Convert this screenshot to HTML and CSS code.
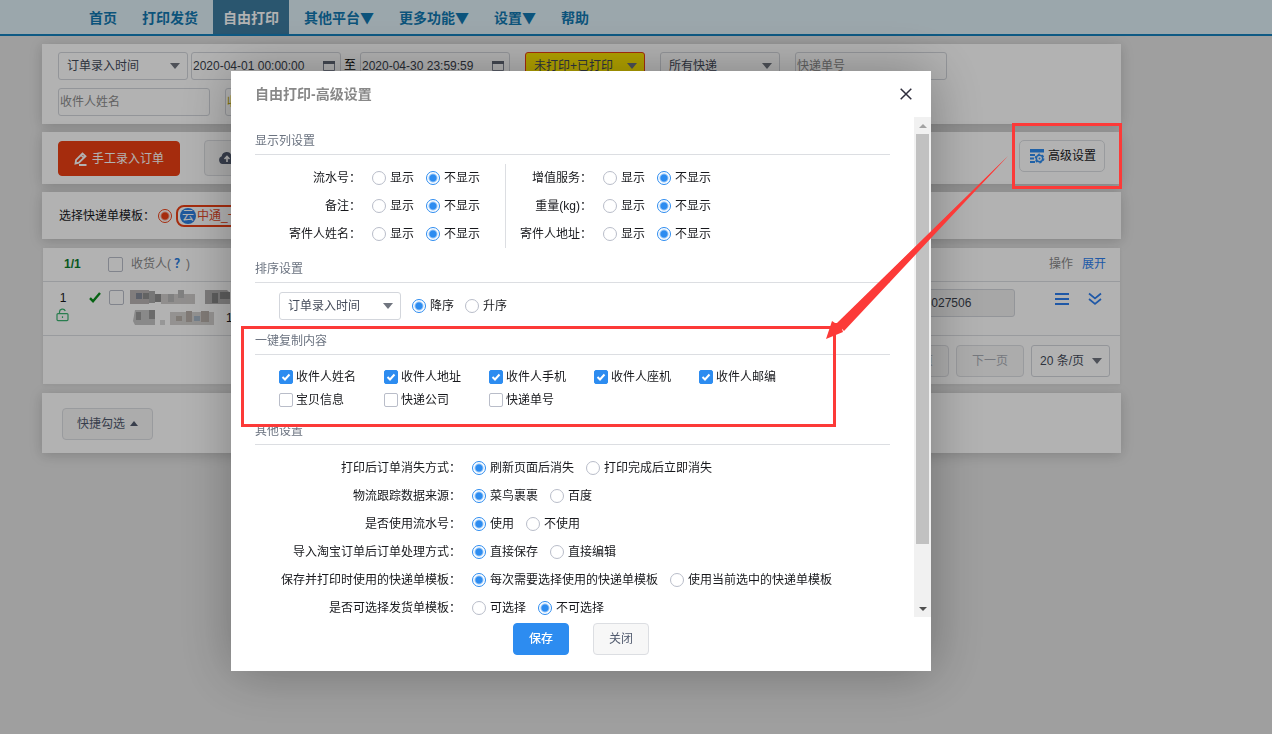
FILE: index.html
```html
<!DOCTYPE html>
<html lang="zh-CN">
<head>
<meta charset="utf-8">
<title>自由打印</title>
<link rel="stylesheet" href="styles.css">
</head>
<body>
<header class="topbar">
  <nav class="nav">
    <a class="nav-item" href="#">首页</a>
    <a class="nav-item" href="#">打印发货</a>
    <a class="nav-item active" href="#">自由打印</a>
    <a class="nav-item" href="#">其他平台▼</a>
    <a class="nav-item" href="#">更多功能▼</a>
    <a class="nav-item" href="#">设置▼</a>
    <a class="nav-item" href="#">帮助</a>
  </nav>
</header>

<main class="page">
  <section class="panel filters">
    <div class="filter-row">
      <div class="range">
        <span class="select w130"><select aria-label="时间类型"><option>订单录入时间</option></select></span>
        <span class="date"><input class="field" type="text" aria-label="开始时间" value="2020-04-01 00:00:00"><svg width="12" height="12" viewBox="0 0 12 12"><path d="M.5 2.500h11v8h-11z" fill="none" stroke="#808695"/><path d="M0 1h12v3H0z" fill="#606774"/></svg></span>
        <span class="to">至</span>
        <span class="date"><input class="field" type="text" aria-label="结束时间" value="2020-04-30 23:59:59"><svg width="12" height="12" viewBox="0 0 12 12"><path d="M.5 2.500h11v8h-11z" fill="none" stroke="#808695"/><path d="M0 1h12v3H0z" fill="#606774"/></svg></span>
      </div>
      <span class="select w120 warn"><select aria-label="打印状态"><option>未打印+已打印</option></select></span>
      <span class="select w120"><select aria-label="快递"><option>所有快递</option></select></span>
      <input class="field w152" type="text" placeholder="快递单号" aria-label="快递单号">
    </div>
    <div class="filter-row">
      <input class="field w152" type="text" placeholder="收件人姓名" aria-label="收件人姓名">
      <input class="field w152 hint" type="text" placeholder="收件人手机" aria-label="收件人手机">
    </div>
  </section>

  <section class="panel actions">
    <button class="btn danger" type="button">
      <svg width="14" height="14" viewBox="0 0 14 14" fill="none" stroke="#fff" stroke-width="1.800"><path d="M1.500 11.500l.6-3.600L8.500 1.500l3 2.700-6.600 6.500zM7 3.200l3 2.700M5 13h7.500"/></svg>手工录入订单
    </button>
    <button class="btn upload" type="button">
      <svg width="18" height="14" viewBox="0 0 18 14"><path d="M4.500 13A4 4 0 0 1 3.700 5.300 5 5 0 0 1 13.400 4.500 4.300 4.300 0 0 1 13.500 13z" fill="#515a6e"/><path d="M9 11V5.500M6.500 8L9 5.500 11.500 8" fill="none" stroke="#fff" stroke-width="1.600"/></svg>导入订单
    </button>
    <button class="btn advanced" type="button">
      <svg width="15" height="15" viewBox="0 0 15 15"><path d="M0 0h14v3.500H0zM0 5h5v2H0zM0 8.500h4v2H0zM0 12h5v2H0z" fill="#2d8cf0"/><circle cx="9.500" cy="9.500" r="4" fill="#fff" stroke="#fff" stroke-width="2"/><circle cx="9.500" cy="9.500" r="3.200" fill="none" stroke="#2d8cf0" stroke-width="1.500"/><circle cx="9.500" cy="9.500" r="4.300" fill="none" stroke="#2d8cf0" stroke-width="1.200" stroke-dasharray="2.250 2.250"/><circle cx="9.500" cy="9.500" r="1" fill="#2d8cf0"/></svg>高级设置
    </button>
  </section>

  <section class="panel template">
    <span>选择快递单模板：</span>
    <input class="radio red" type="radio" name="tpl" id="tpl" checked>
    <label class="pill" for="tpl"><span class="cloud">云</span>中通_一联单</label>
  </section>

  <section class="panel orders">
    <table class="grid">
      <thead>
        <tr>
          <th class="col-index count">1/1</th>
          <th class="col-main"><div class="cell"><input class="check big" type="checkbox" aria-label="全选"><span>收货人(<b class="help">？</b>)</span></div></th>
          <th class="col-ops">操作<a class="link" href="#">展开</a></th>
        </tr>
      </thead>
      <tbody>
        <tr>
          <td class="col-index">
            <div class="index">
              <span>1</span>
              <svg class="tick" width="12" height="12" viewBox="0 0 12 12"><path d="M1 6.200L4 9.200 11 1" fill="none" stroke="#0a8f1c" stroke-width="2.400"/></svg>
              <svg width="14" height="14" viewBox="0 0 14 14" fill="none" stroke="#3cb371" stroke-width="1.200"><rect x="1" y="5.600" width="11" height="7" rx="1"/><path d="M3.500 5.500V4a3 3 0 0 1 5.800-1M6.500 8.200v1.800"/></svg>
            </div>
          </td>
          <td class="col-main">
            <div class="cell row-top">
              <input class="check big" type="checkbox" aria-label="选择订单">
              <svg class="mosaic" width="104" height="36" viewBox="0 0 104 36">
                <path d="M0 1h19v14H0z" fill="#b9b3b4"/><path d="M6 4h6v6H6z" fill="#858a99"/><path d="M13 4h6v6h-6zM25 5h6v8h-6z" fill="#8e8e8e"/><path d="M19 2h6v12h-6z" fill="#aaa"/><path d="M31 5h34v10H31z" fill="#cfcccb"/><path d="M38 5h6v8h-6zM48 1h6v8h-6z" fill="#b8b8b8"/><path d="M75 1h22l3 3v11H75z" fill="#b2b0b0"/><path d="M82 4h6v10h-6zM90 3h10v7H90z" fill="#858585"/>
                <path d="M5 21h20v15H5l-2-4z" fill="#c4c4c4"/><path d="M6 23h5v8H6zM19 21h6v9h-6z" fill="#9a9a9a"/><path d="M30 31h5v5h-5z" fill="#d8d8d8"/><path d="M40 23h44v13H40z" fill="#d4d2d0"/><path d="M46 27h6v5h-6zM56 22h6v11h-6zM71 22h8v11h-8z" fill="#b8b0aa"/><path d="M64 27h6v5h-6z" fill="#a8b8c8"/>
              </svg>
              <div class="number"><span class="line2">1</span><input class="field filled" type="text" aria-label="运单号" value="73027506"></div>
            </div>
          </td>
          <td class="col-ops">
            <div class="ops">
              <button class="icon-btn" type="button" aria-label="菜单"><svg width="14" height="12" viewBox="0 0 14 12"><path d="M0 1h14M0 6h14M0 11h14" stroke="#2d7ff0" stroke-width="2"/></svg></button>
              <button class="icon-btn" type="button" aria-label="展开"><svg width="14" height="14" viewBox="0 0 14 14"><path d="M1 1.500l6 5 6-5M1 7l6 5 6-5" fill="none" stroke="#2d7ff0" stroke-width="1.700"/></svg></button>
            </div>
          </td>
        </tr>
      </tbody>
    </table>
    <div class="pager">
      <button class="btn" type="button" disabled>上一页</button>
      <button class="btn" type="button" disabled>下一页</button>
      <span class="select page-size"><select aria-label="每页条数"><option>20 条/页</option></select></span>
    </div>
  </section>

  <section class="panel quick">
    <button class="btn gray" type="button">快捷勾选<i class="up"></i></button>
  </section>
</main>

<div class="shade"></div>

<div class="modal" role="dialog" aria-labelledby="dlg-title">
  <div class="modal-head">
    <h1 id="dlg-title">自由打印-高级设置</h1>
    <button class="icon-btn" type="button" aria-label="关闭窗口"><svg width="12" height="12" viewBox="0 0 12 12"><path d="M.7.7l10.600 10.600M11.300.7L.7 11.300" stroke="#2e2d3c" stroke-width="1.500"/></svg></button>
  </div>
  <div class="modal-body">
    <form class="settings">
      <h2>显示列设置</h2>
      <div class="columns">
        <div class="rows">
          <div class="row"><span class="name">流水号：</span><label><input class="radio" type="radio" name="a1">显示</label><label><input class="radio" type="radio" name="a1" checked>不显示</label></div>
          <div class="row"><span class="name">备注：</span><label><input class="radio" type="radio" name="a2">显示</label><label><input class="radio" type="radio" name="a2" checked>不显示</label></div>
          <div class="row"><span class="name">寄件人姓名：</span><label><input class="radio" type="radio" name="a3">显示</label><label><input class="radio" type="radio" name="a3" checked>不显示</label></div>
        </div>
        <div class="rows second">
          <div class="row"><span class="name">增值服务：</span><label><input class="radio" type="radio" name="b1">显示</label><label><input class="radio" type="radio" name="b1" checked>不显示</label></div>
          <div class="row"><span class="name">重量(kg)：</span><label><input class="radio" type="radio" name="b2">显示</label><label><input class="radio" type="radio" name="b2" checked>不显示</label></div>
          <div class="row"><span class="name">寄件人地址：</span><label><input class="radio" type="radio" name="b3">显示</label><label><input class="radio" type="radio" name="b3" checked>不显示</label></div>
        </div>
      </div>

      <h2>排序设置</h2>
      <div class="sort">
        <span class="select w122"><select aria-label="排序字段"><option>订单录入时间</option></select></span>
        <label><input class="radio" type="radio" name="s" checked>降序</label><label><input class="radio" type="radio" name="s">升序</label>
      </div>

      <h2>一键复制内容</h2>
      <div class="copy">
        <label><input class="check" type="checkbox" checked>收件人姓名</label>
        <label><input class="check" type="checkbox" checked>收件人地址</label>
        <label><input class="check" type="checkbox" checked>收件人手机</label>
        <label><input class="check" type="checkbox" checked>收件人座机</label>
        <label><input class="check" type="checkbox" checked>收件人邮编</label>
        <label><input class="check" type="checkbox">宝贝信息</label>
        <label><input class="check" type="checkbox">快递公司</label>
        <label><input class="check" type="checkbox">快递单号</label>
      </div>

      <h2>其他设置</h2>
      <div class="others">
        <div class="row"><span class="name">打印后订单消失方式：</span><label><input class="radio" type="radio" name="c1" checked>刷新页面后消失</label><label><input class="radio" type="radio" name="c1">打印完成后立即消失</label></div>
        <div class="row"><span class="name">物流跟踪数据来源：</span><label><input class="radio" type="radio" name="c2" checked>菜鸟裹裹</label><label><input class="radio" type="radio" name="c2">百度</label></div>
        <div class="row"><span class="name">是否使用流水号：</span><label><input class="radio" type="radio" name="c3" checked>使用</label><label><input class="radio" type="radio" name="c3">不使用</label></div>
        <div class="row"><span class="name">导入淘宝订单后订单处理方式：</span><label><input class="radio" type="radio" name="c4" checked>直接保存</label><label><input class="radio" type="radio" name="c4">直接编辑</label></div>
        <div class="row"><span class="name">保存并打印时使用的快递单模板：</span><label><input class="radio" type="radio" name="c5" checked>每次需要选择使用的快递单模板</label><label><input class="radio" type="radio" name="c5">使用当前选中的快递单模板</label></div>
        <div class="row"><span class="name">是否可选择发货单模板：</span><label><input class="radio" type="radio" name="c6">可选择</label><label><input class="radio" type="radio" name="c6" checked>不可选择</label></div>
      </div>
    </form>
    <div class="scrollbar" aria-hidden="true">
      <i class="arrow-up"></i><div class="track"><div class="thumb"></div></div><i class="arrow-down"></i>
    </div>
  </div>
  <div class="modal-foot">
    <button class="btn primary" type="button">保存</button>
    <button class="btn gray" type="button">关闭</button>
  </div>
</div>

<svg class="marks" width="1272" height="734" viewBox="0 0 1272 734" aria-hidden="true">
  <g fill="none" stroke="#fc3a38" stroke-width="3"><path d="M1013.500 124.500h107v63h-107z"/><path d="M242.500 327.500h592v98h-592z"/></g>
  <path d="M1008 156L842 329l1 3-17 7 6-18 3 2 3 0z" fill="#fc3a38"/>
  <path d="M1008 156L837 323l7 8z" fill="#fc3a38"/>
</svg>
</body>
</html>
```
FILE: styles.css
```css
* { box-sizing: border-box; }

body {
  margin: 0;
  min-height: 100vh;
  background: #e4e4e4;
  color: #17181c;
  font: 12px/20px "Liberation Sans", "Noto Sans CJK SC", sans-serif;
}

button, input, select { font: inherit; color: inherit; margin: 0; }
svg { display: block; flex: none; }
a { text-decoration: none; }

.topbar { height: 36px; background: #dff0f7; border-bottom: 2px solid #1682be; }
.nav { display: flex; gap: 5px; height: 100%; padding-left: 79px; }
.nav-item { padding: 0 10px; font-family: "Noto Sans CJK SC", sans-serif; font-size: 14px; line-height: 34px; font-weight: 700; color: #1278b0; white-space: nowrap; }
.nav-item.active { background: #3d7ba0; color: #fff; }

.page { display: flex; flex-direction: column; gap: 8px; margin: 8px 151px 0 42px; }
.panel { background: #fff; box-shadow: 0 2px 12px rgba(0, 0, 0, .18); }

.filters { display: flex; flex-direction: column; gap: 8px; padding: 8px 16px; }
.filter-row { display: flex; gap: 15px; }
.range { display: flex; gap: 3px; }
.to { width: 13px; line-height: 26px; color: #000; }

.field {
  height: 28px;
  padding: 0 1px;
  border: 1px solid #d3d6dc;
  border-radius: 3px;
  background: #fff;
  color: #3a3f4c;
  outline: 0;
}
.field::placeholder { color: #8c8c8c; opacity: 1; }
.hint::placeholder { color: #b5a200; }
.w120 { width: 120px; }
.w122 { width: 122px; }
.w130 { width: 130px; }
.w152 { width: 152px; }

.date { position: relative; display: flex; width: 150px; }
.date .field { width: 100%; }
.date svg { position: absolute; right: 6px; top: 8px; }

.select { position: relative; display: inline-flex; flex: none; height: 28px; }
.select select {
  appearance: none;
  width: 100%;
  padding: 0 22px 0 8px;
  border: 1px solid #d3d6dc;
  border-radius: 3px;
  background: #fff;
  color: #444b5a;
}
.select::after {
  content: "";
  position: absolute;
  right: 8px;
  top: 50%;
  margin-top: -3px;
  border: 5px solid transparent;
  border-top: 6px solid #70757f;
  border-bottom: 0;
}
.warn select { background: #ffe800; border-color: #ed3f14; }

.btn {
  display: inline-flex;
  align-items: center;
  justify-content: center;
  height: 32px;
  padding: 0 15px;
  border: 1px solid #dcdee2;
  border-radius: 4px;
  background: #fff;
  color: #515a6e;
  white-space: nowrap;
}
.btn:disabled { background: #f7f7f7; color: #a9adb5; }
.btn.gray { background: #f7f7f7; }
.btn.primary { background: #2d8cf0; border-color: #2d8cf0; color: #fff; font-weight: 500; }

.actions { display: flex; align-items: flex-start; padding: 8px 16px; }
.actions .danger { height: 35px; margin-top: 1px; gap: 4px; background: #ed3f14; border-color: #ed3f14; color: #fff; }
.actions .upload { height: 36px; margin-left: 24px; padding: 0 13px; gap: 5px; background: #f7f7f7; }
.actions .advanced { margin-left: auto; padding: 0 8px 0 10px; gap: 3px; border-radius: 5px; color: #17181c; }

.template { display: flex; align-items: center; height: 47px; padding-left: 17px; }
.template .radio { margin-left: 3px; }
.pill {
  display: flex;
  align-items: center;
  gap: 1px;
  height: 22px;
  margin-left: 4px;
  padding: 0 8px 0 2px;
  border: 2px solid #ed3f14;
  border-radius: 8px;
  color: #e04a2a;
}
.cloud { width: 16px; height: 16px; border-radius: 50%; background: #2d7fe0; color: #fff; line-height: 16px; text-align: center; }

.orders { margin: 1px 1px 1px; box-shadow: 0 1px 4px rgba(0, 0, 0, .08); }
.grid { width: 100%; border-collapse: collapse; table-layout: fixed; }
.grid th, .grid td { padding: 0; border-bottom: 1px solid #dcdee2; text-align: left; font-weight: 400; }
.grid th { height: 33px; color: #888; }
.grid td { height: 54px; vertical-align: top; }
.grid .col-index { width: 65px; }
.grid .count { padding-left: 21px; font-weight: 700; color: #0b7d2d; }
.grid .col-ops { width: 105px; }
.grid th.col-ops { padding-left: 34px; }
.link { margin-left: 9px; color: #2d7ff0; }
.help { padding-left: 3px; color: #2d7fe0; }
.cell { display: flex; align-items: center; gap: 8px; }
.row-top { align-items: flex-start; gap: 6px; padding: 7px 0 0 1px; }
.row-top .check { margin-top: 1px; }
.index { display: grid; grid-template-columns: 14px 12px; gap: 0 19px; padding: 6px 0 0 13px; justify-items: center; align-items: center; }
.number { display: flex; flex: 1; justify-content: space-between; }
.line2 { margin: 19px 0 0 -14px; }
.filled { width: 120px; padding-left: 22px; background: #f0f0f0; }
.ops { display: flex; gap: 19px; padding: 10px 0 0 40px; }
.icon-btn { display: flex; align-items: center; justify-content: center; width: 14px; height: 14px; padding: 0; border: 0; background: none; }
.pager { display: flex; justify-content: flex-end; gap: 7px; padding: 9px 10px 7px; }
.page-size { width: 79px; height: 32px; }
.pager .btn { width: 68px; }

.quick { padding: 15px 20px 13px; }
.quick .btn { padding: 0 14px; gap: 5px; }
.up { border: 4px solid transparent; border-bottom: 5px solid #515a6e; border-top: 0; }

.radio, .check { appearance: none; flex: none; width: 14px; height: 14px; border: 1px solid #b9bdc9; background: #fff; }
.radio { border-radius: 50%; }
.radio:checked { border-color: #2d8cf0; background: radial-gradient(circle, #2d8cf0 3px, #fff 5px); }
.radio.red:checked { border-color: #ed3f14; background: radial-gradient(circle, #ed3f14 3px, #fff 5px); }
.check { border-radius: 2px; }
.check.big { width: 15px; height: 15px; }
.check:checked {
  border-color: #2d8cf0;
  background: #2d8cf0 url("data:image/svg+xml,%3Csvg xmlns='http://www.w3.org/2000/svg' viewBox='0 0 12 12'%3E%3Cpath d='M2.500 6l2.500 2.500L9.500 3.500' fill='none' stroke='white' stroke-width='2'/%3E%3C/svg%3E") center / 12px no-repeat;
}

.shade { position: fixed; inset: 0; background: rgba(0, 0, 0, .3); }

.modal {
  position: fixed;
  top: 71px;
  left: 231px;
  display: flex;
  flex-direction: column;
  width: 700px;
  height: 600px;
  background: #fff;
  box-shadow: 1px 1px 50px rgba(0, 0, 0, .3);
}
.modal-head { display: flex; align-items: center; justify-content: space-between; height: 46px; padding: 0 18px 0 24px; }
.modal-head h1 { margin: 0; font-size: 14px; font-weight: 700; color: #888; }
.modal-body { display: flex; height: 500px; overflow: hidden; }
.settings { flex: 1; padding: 10px 24px 0; }
.settings h2 { margin: 0; padding-top: 2px; border-bottom: 1px solid #dcdee2; font-size: 12px; line-height: 25px; font-weight: 400; color: #6b7380; }
.settings label { display: flex; align-items: center; gap: 4px; white-space: nowrap; }

.columns { display: flex; padding: 9px 0 7px; }
.rows { width: 251px; border-right: 1px solid #dcdee2; }
.rows.second { width: auto; border: 0; }
.row { display: flex; align-items: center; gap: 12px; height: 28px; }
.name { width: 106px; text-align: right; white-space: nowrap; }
.row .name { margin-right: -1px; }
.second .name { width: 86px; }
.others { padding-top: 9px; }
.others .name { width: 206px; }
.sort { display: flex; gap: 11px; padding: 9px 0 7px 24px; }
.copy { display: grid; grid-template-columns: repeat(5, 105px); grid-auto-rows: 23px; padding: 10px 0 6px 24px; }
.settings .copy label { gap: 3px; }

.scrollbar { display: flex; flex-direction: column; width: 17px; background: #f1f1f1; }
.scrollbar i { margin: 7px auto 6px; border: 4px solid transparent; }
.scrollbar .arrow-up { border-top: 0; border-bottom-color: #a3a3a3; }
.scrollbar .arrow-down { border-bottom: 0; border-top-color: #505050; }
.track { flex: 1; padding: 0 2px; }
.thumb { height: 88%; background: #c1c1c1; }

.modal-foot { display: flex; justify-content: center; gap: 24px; padding-top: 6px; }
.modal-foot .btn { width: 56px; }

.marks { position: absolute; top: 0; left: 0; pointer-events: none; }
```
